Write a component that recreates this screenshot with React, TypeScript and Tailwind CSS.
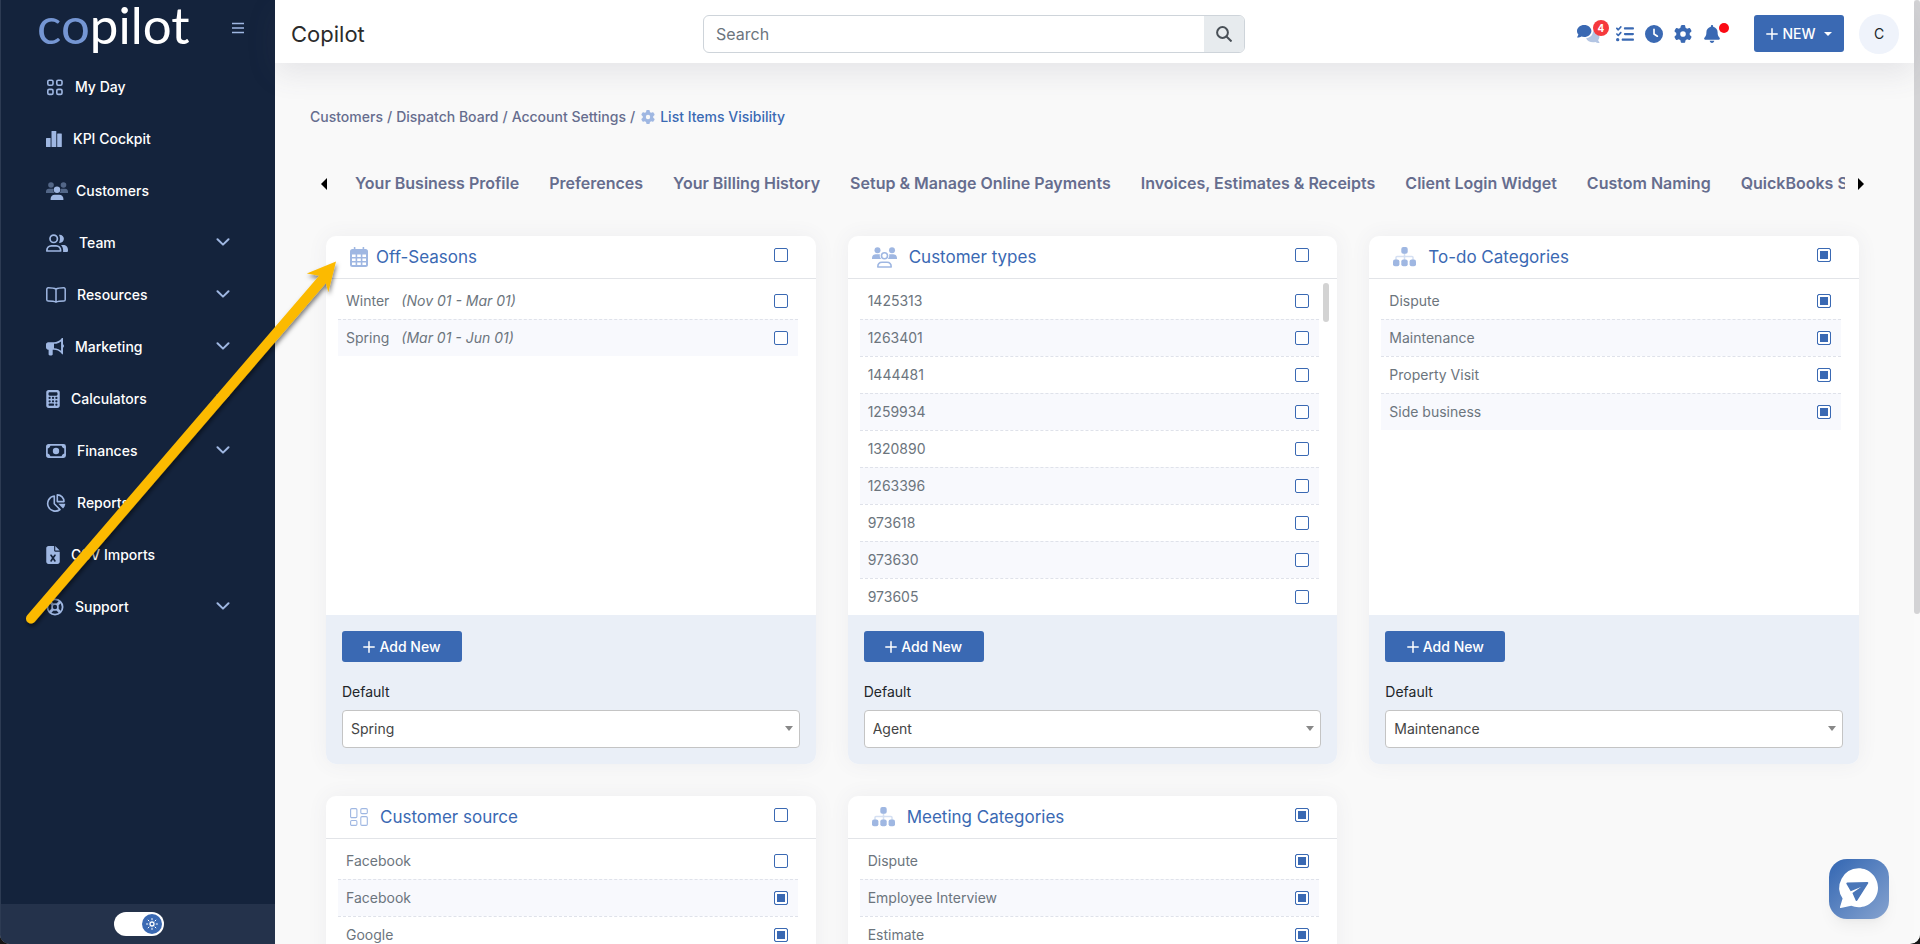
import { useState } from "react";
import type { ReactNode } from "react";
import {
  FaBell,
  FaCalculator,
  FaClock,
  FaFileExcel,
  FaGear,
  FaListCheck,
} from "react-icons/fa6";

type Item = { name: string; note?: string; checked?: boolean };

type ListCard = {
  id: string;
  title: string;
  icon: ReactNode;
  checked?: boolean;
  items: Item[];
  defaultValue: string;
  scrollable?: boolean;
};

/* ---------- Icons ---------- */

function GridIcon() {
  return (
    <svg viewBox="0 0 18 17" className="w-[18px] h-[17px]" fill="none" stroke="#9fb7e2" strokeWidth="1.6">
      <rect x="1.800" y="1.200" width="5.200" height="5" rx="1.400" />
      <rect x="10.800" y="1.200" width="5.200" height="5" rx="1.400" />
      <rect x="1.800" y="10.400" width="5.200" height="5" rx="1.400" />
      <rect x="10.800" y="10.400" width="5.200" height="5" rx="1.400" />
    </svg>
  );
}

function BarsIcon() {
  return (
    <svg viewBox="0 0 16 16" className="w-4 h-4" fill="#9fb7e2">
      <rect x="0" y="7" width="4.600" height="9" rx=".5" />
      <rect x="5.500" y="0" width="4.800" height="16" rx=".5" />
      <rect x="11.200" y="2.600" width="4.600" height="13.400" rx=".5" />
    </svg>
  );
}

function CustomersIcon() {
  return (
    <svg viewBox="0 0 22 18" className="w-[22px] h-[18px]" fill="#9fb7e2">
      <g opacity="0.45">
        <circle cx="5" cy="3" r="2.8" />
        <circle cx="17.5" cy="3" r="2.8" />
        <path d="M0 11V9.600C0 8 1.200 6.800 2.800 6.800h3.600c.4 0 .8.100 1.100.3-.5 1.600 0 2.900 1 3.900z" />
        <path d="M22 11V9.600c0-1.600-1.200-2.800-2.800-2.800h-3.600c-.4 0-.8.100-1.100.3.5 1.600 0 2.900-1 3.900z" />
      </g>
      <circle cx="11" cy="7.700" r="3.200" />
      <path d="M4.500 17.500c0-2.800 1.700-4.700 4.300-4.700h4.400c2.600 0 4.300 1.900 4.300 4.700 0 .3-.2.500-.5.500H5c-.3 0-.5-.2-.5-.5z" />
    </svg>
  );
}

function TeamIcon() {
  return (
    <svg viewBox="0 0 22 18" className="w-[22px] h-[18px]" fill="none" stroke="#9fb7e2" strokeWidth="1.7">
      <circle cx="7.700" cy="4.800" r="3.700" />
      <path d="M.9 17v-.8c0-2.500 2-4.400 4.400-4.400h4.900c2.400 0 4.400 1.900 4.400 4.400v.8z" strokeLinejoin="round" />
      <path d="M13 .8c2.600-.4 4.900 1.500 4.900 4s-2.300 4.500-4.900 4c1.300-2.500 1.300-5.500 0-8z" fill="#9fb7e2" stroke="none" />
      <path d="M15 11h2.300c2.600 0 4.700 2 4.700 4.700V17c0 .5-.4.900-.9.900h-4c.3-2.600-.4-5.200-2.100-6.900z" fill="#9fb7e2" stroke="none" />
    </svg>
  );
}

function BookIcon() {
  return (
    <svg viewBox="0 0 20 16" className="w-5 h-4" fill="none" stroke="#9fb7e2" strokeWidth="1.5" strokeLinejoin="round">
      <path d="M10 2.200C8.200 1 5.500.8 2.200.8c-.9 0-1.400.5-1.400 1.400v10.600c0 .9.500 1.300 1.400 1.300 3.300 0 6 .2 7.800 1.100 1.800-.9 4.500-1.100 7.800-1.100.9 0 1.400-.4 1.400-1.300V2.200c0-.9-.5-1.400-1.400-1.400-3.300 0-6 .2-7.800 1.400zM10 2.200v12.600" />
    </svg>
  );
}

function MegaphoneIcon() {
  return (
    <svg viewBox="0 0 18 18" className="w-[18px] h-[18px]" fill="#9fb7e2">
      <path d="M2.200 4.200H8v7.600H6.700v4.400c0 .7-.5 1.200-1.200 1.200H3.800c-.7 0-1.200-.5-1.200-1.200v-4.400h-.4C1 11.800 0 10.800 0 9.600V6.400c0-1.200 1-2.200 2.200-2.200z" />
      <path d="M8 5c3.200 0 5.800-1.400 8.100-3.700v13.400C13.800 12.400 11.200 11 8 11" fill="none" stroke="#9fb7e2" strokeWidth="1.700" />
      <path d="M15.300.9c0-.9 1.700-.9 1.700 0v5.300c.6.400 1 1 1 1.800s-.4 1.400-1 1.800v5.300c0 .9-1.700.9-1.700 0z" />
    </svg>
  );
}

function MoneyIcon() {
  return (
    <svg viewBox="0 0 20 14" className="w-5 h-[14px]">
      <rect x=".9" y=".9" width="18.200" height="12.200" rx="1.600" fill="none" stroke="#9fb7e2" strokeWidth="1.700" />
      <circle cx="10" cy="7" r="3.200" fill="#9fb7e2" />
      <path d="M1 1h3.500c0 1.900-1.600 3.500-3.500 3.500zM19 1h-3.500c0 1.900 1.600 3.500 3.500 3.500zM1 13h3.500c0-1.900-1.600-3.500-3.500-3.500zM19 13h-3.500c0-1.900 1.600-3.500 3.500-3.500z" fill="#9fb7e2" />
    </svg>
  );
}

function PieIcon() {
  return (
    <svg viewBox="0 0 20 18" className="w-5 h-[18px]" fill="none" stroke="#9fb7e2" strokeWidth="1.600" strokeLinejoin="round">
      <path d="M8.300 2A7.600 7.600 0 1 0 14 15.500L8.300 9.800z" />
      <path d="M11.300.9c3.800 0 6.700 2.900 6.700 6.700h-6.700z" />
      <path d="M12.300 9.800h7c-.2 1.900-1 3.500-2.300 4.800z" fill="#9fb7e2" stroke="none" />
    </svg>
  );
}

function LifeRingIcon() {
  return (
    <svg viewBox="0 0 18 18" className="w-[18px] h-[18px]" fill="none" stroke="#9fb7e2">
      <circle cx="9" cy="9" r="7.600" strokeWidth="1.800" />
      <circle cx="9" cy="9" r="3" strokeWidth="1.600" />
      <path d="M3.600 3.600L6.800 6.800M14.400 3.600l-3.200 3.200M3.600 14.400l3.200-3.200M14.400 14.400l-3.200-3.200" strokeWidth="2.800" />
    </svg>
  );
}

function CommentsIcon() {
  return (
    <svg viewBox="0 0 24 18" className="w-6 h-[18px]">
      <path d="M16 6.200c3.600.2 6.400 2.500 6.400 5.500 0 1.300-.5 2.400-1.300 3.400.2.900.7 1.600 1.300 2.200.2.300 0 .7-.4.700-1.400 0-2.600-.5-3.500-1.100-3.900 1-8.200-.4-9.400-3.700 4-.4 7-3.300 6.900-7z" fill="#b3c5e3" />
      <path d="M7.200 0c4 0 7.200 2.700 7.200 6s-3.200 6-7.200 6c-1 0-2-.2-2.900-.5-.9.600-2.200 1.100-3.700 1.100-.5 0-.6-.4-.4-.7.500-.6 1-1.400 1.200-2.300C.5 8.600 0 7.400 0 6c0-3.300 3.200-6 7.200-6z" fill="#3a69b3" />
    </svg>
  );
}

function CalendarIcon() {
  return (
    <svg viewBox="0 0 18 20" className="w-[18px] h-5">
      <rect x="0" y="2" width="18" height="18" rx="2.500" fill="#9fb7e2" />
      <path d="M4.600.5v3M13.400.5v3" stroke="#9fb7e2" strokeWidth="1.600" strokeLinecap="round" />
      <g fill="#fff">
        {[7.5, 11.5, 15.5].map((y) =>
          [2, 7.2, 12.4].map((x) => <rect key={`${x}-${y}`} x={x} y={y} width="3.600" height="2.500" />)
        )}
      </g>
    </svg>
  );
}

function TypesIcon() {
  return (
    <svg viewBox="0 0 25 21" className="w-[25px] h-[21px]" fill="#9fb7e2">
      <circle cx="5.500" cy="3.200" r="3" />
      <circle cx="20" cy="3.200" r="3" />
      <path d="M0 12v-1c0-2.200 1.500-3.800 3.700-3.800H7c.3 0 .6 0 .9.100-.5 1.800.1 3.500 1.300 4.700zM25 12v-1c0-2.200-1.500-3.800-3.700-3.800H18c-.3 0-.6 0-.9.100.5 1.800-.1 3.500-1.300 4.700z" />
      <circle cx="12.500" cy="8.800" r="3" fill="none" stroke="#9fb7e2" strokeWidth="1.600" />
      <path d="M5.800 20c0-3 1.700-4.700 4.200-4.700h5c2.500 0 4.200 1.700 4.200 4.700z" fill="none" stroke="#9fb7e2" strokeWidth="1.600" strokeLinejoin="round" />
    </svg>
  );
}

function SitemapIcon() {
  return (
    <svg viewBox="0 0 23 20" className="w-[23px] h-5">
      <path d="M3 13v-2.500c0-.6.400-1 1-1h15c.6 0 1 .4 1 1V13M11.500 6v7" fill="none" stroke="#d5e0f2" strokeWidth="1.500" />
      <g fill="#9fb7e2">
        <rect x="8.300" y="0" width="6.400" height="6.800" rx="2" />
        <rect x="0" y="12.500" width="6.400" height="6.800" rx="2" />
        <rect x="8.300" y="12.500" width="6.400" height="6.800" rx="2" />
        <rect x="16.600" y="12.500" width="6.400" height="6.800" rx="2" />
      </g>
    </svg>
  );
}

function SourceIcon() {
  return (
    <svg viewBox="0 0 18 18" className="w-[18px] h-[18px]" fill="none" stroke="#9fb7e2" strokeWidth="1.100">
      <rect x=".6" y=".6" width="6.300" height="9" rx="1.200" />
      <rect x="10.800" y=".6" width="6.500" height="5" rx="1.200" />
      <rect x=".6" y="12.500" width="6.300" height="4.900" rx="1.200" />
      <rect x="10.800" y="8.600" width="6.500" height="8.800" rx="1.200" />
    </svg>
  );
}

function PlusIcon() {
  return (
    <svg viewBox="0 0 12 12" className="w-3 h-3" stroke="#fff" strokeWidth="1.500" strokeLinecap="round">
      <path d="M6 .8v10.400M.8 6h10.400" />
    </svg>
  );
}

/* ---------- Data ---------- */

const NAV = [
  { label: "My Day", icon: <GridIcon /> },
  { label: "KPI Cockpit", icon: <BarsIcon /> },
  { label: "Customers", icon: <CustomersIcon />, tight: true },
  { label: "Team", icon: <TeamIcon />, open: true },
  { label: "Resources", icon: <BookIcon />, open: true },
  { label: "Marketing", icon: <MegaphoneIcon />, open: true },
  { label: "Calculators", icon: <FaCalculator className="w-[14px] h-[18px]" />, open: true },
  { label: "Finances", icon: <MoneyIcon />, open: true },
  { label: "Reports", icon: <PieIcon /> },
  { label: "CSV Imports", icon: <FaFileExcel className="w-[14px] h-[18px]" /> },
  { label: "Support", icon: <LifeRingIcon />, open: true },
];

const TABS = [
  "Your Business Profile",
  "Preferences",
  "Your Billing History",
  "Setup & Manage Online Payments",
  "Invoices, Estimates & Receipts",
  "Client Login Widget",
  "Custom Naming",
  "QuickBooks Settings",
];

const CARDS: ListCard[] = [
  {
    id: "off-seasons",
    title: "Off-Seasons",
    icon: <CalendarIcon />,
    items: [
      { name: "Winter", note: "(Nov 01 - Mar 01)" },
      { name: "Spring", note: "(Mar 01 - Jun 01)" },
    ],
    defaultValue: "Spring",
  },
  {
    id: "customer-types",
    title: "Customer types",
    icon: <TypesIcon />,
    items: ["1425313", "1263401", "1444481", "1259934", "1320890", "1263396", "973618", "973630", "973605"].map(
      (name) => ({ name })
    ),
    defaultValue: "Agent",
    scrollable: true,
  },
  {
    id: "todo-categories",
    title: "To-do Categories",
    icon: <SitemapIcon />,
    checked: true,
    items: ["Dispute", "Maintenance", "Property Visit", "Side business"].map((name) => ({ name, checked: true })),
    defaultValue: "Maintenance",
  },
  {
    id: "customer-source",
    title: "Customer source",
    icon: <SourceIcon />,
    items: [
      { name: "Facebook" },
      { name: "Facebook", checked: true },
      { name: "Google", checked: true },
    ],
    defaultValue: "Google",
  },
  {
    id: "meeting-categories",
    title: "Meeting Categories",
    icon: <SitemapIcon />,
    checked: true,
    items: ["Dispute", "Employee Interview", "Estimate"].map((name) => ({ name, checked: true })),
    defaultValue: "Estimate",
  },
];

/* ---------- Layout parts ---------- */

function Sidebar() {
  const [light, setLight] = useState(true);

  return (
    <aside className="w-[275px] shrink-0 flex flex-col bg-[#14233c] border-l border-[#2d3b53]">
      <div className="h-[61px] shrink-0 flex items-start justify-between pl-9 pr-[31px]">
        <a href="#" className="font-[Lato,sans-serif] text-[51px] leading-[50px] text-white">
          <span className="text-[#7596d3]">co</span>pilot
        </a>
        <button aria-label="Toggle menu" className="mt-[22px]">
          <svg viewBox="0 0 12 12" className="w-3 h-3" stroke="#9fb7e2" strokeWidth="1.500">
            <path d="M0 1.500h12M0 6h12M0 10.500h12" />
          </svg>
        </button>
      </div>

      <nav className="flex-1 min-h-0 overflow-hidden">
        {NAV.map((item) => (
          <a
            key={item.label}
            href="#"
            className={`h-[52px] px-[45px] flex items-center text-sm font-medium text-white ${
              item.tight ? "gap-2" : "gap-[11px]"
            }`}
          >
            <span className="text-[#9fb7e2] shrink-0">{item.icon}</span>
            {item.label}
            {item.open && (
              <svg viewBox="0 0 14 10" className="w-[14px] h-[10px] ml-auto" fill="none" stroke="#9fb7e2" strokeWidth="2">
                <path d="M1.500 1.200L7 6.600l5.500-5.400" strokeLinecap="round" strokeLinejoin="round" />
              </svg>
            )}
          </a>
        ))}
      </nav>

      <div className="h-10 shrink-0 flex items-center justify-center pl-0.5 bg-[#24324b]">
        <button
          role="switch"
          aria-checked={light}
          aria-label="Light theme"
          onClick={() => setLight(!light)}
          className={`w-[50px] h-6 px-0.5 rounded-full bg-white flex items-center ${
            light ? "justify-end" : "justify-start"
          }`}
        >
          <span className="w-5 h-5 rounded-full bg-[#3a69b3] flex items-center justify-center">
            <svg viewBox="0 0 12 12" className="w-3 h-3" fill="none" stroke="#fff" strokeLinecap="round">
              <circle cx="6" cy="6" r="2" strokeWidth="1.300" />
              <path d="M6 .5v1.300M6 10.200v1.300M.5 6h1.300M10.200 6h1.300M2.100 2.100l.9.900M9 9l.9.900M2.100 9.900L3 9M9 3l.9-.9" />
            </svg>
          </span>
        </button>
      </div>
    </aside>
  );
}

function TopBar() {
  return (
    <header className="relative z-10 h-[63px] shrink-0 bg-white flex items-center pr-[15px] shadow-[0_10px_30px_rgba(82,85,110,0.12)]">
      <h1 className="w-[428px] pl-4 mt-1 text-[22px] leading-8 text-[#2b2b2b]">Copilot</h1>

      <form className="w-[34%] max-w-[542px] h-[38px] mt-1 flex rounded-md border border-[#ced4da] bg-white overflow-hidden">
        <input
          type="text"
          aria-label="Search"
          placeholder="Search"
          className="flex-1 min-w-0 px-3 text-base text-[#212529] placeholder:text-[#6c757d] focus:outline-none"
        />
        <button type="button" aria-label="Run search" className="w-10 bg-[#e7ebee] flex items-center justify-center">
          <svg viewBox="0 0 16 16" className="w-4 h-4" fill="none" stroke="#495057" strokeWidth="2">
            <circle cx="6.500" cy="6.500" r="5.400" />
            <path d="M10.500 10.500l5 5" />
          </svg>
        </button>
      </form>

      <div className="ml-auto mt-1 flex items-center gap-[11px] text-[#3a69b3]">
        <button aria-label="Messages" className="relative mr-1">
          <CommentsIcon />
          <span className="absolute -top-[5px] -right-2 w-4 h-4 rounded-full bg-[#f5393d] text-white text-[10px] leading-4 font-bold text-center">
            4
          </span>
        </button>
        <button aria-label="Tasks">
          <FaListCheck className="w-[18px] h-[18px]" />
        </button>
        <button aria-label="History">
          <FaClock className="w-[18px] h-[18px]" />
        </button>
        <button aria-label="Settings">
          <FaGear className="w-[18px] h-[18px]" />
        </button>
        <button aria-label="Notifications" className="relative">
          <FaBell className="w-[18px] h-[18px]" />
          <span className="absolute -top-0.5 -right-2 w-2.5 h-2.5 rounded-full bg-[#fb0a14]" />
        </button>
      </div>

      <button className="ml-[33px] mt-1 w-[90px] h-[37px] rounded-[3px] bg-[#3a69b3] text-white text-sm font-medium flex items-center justify-center gap-1">
        <PlusIcon />
        NEW
        <span className="ml-1 border-x-4 border-t-4 border-x-transparent border-t-white" />
      </button>
      <button
        aria-label="Account"
        className="ml-[15px] mt-1 w-10 h-10 rounded-full bg-[#eff3fb] text-sm text-[#212529] shrink-0"
      >
        C
      </button>
    </header>
  );
}

function Breadcrumbs() {
  return (
    <div className="pl-[35px] pt-[43px] h-16 flex items-center gap-1 text-sm font-medium text-[#666d8e] whitespace-nowrap">
      <a href="#">Customers</a>/<a href="#">Dispatch Board</a>/<a href="#">Account Settings</a>/
      <a href="#" className="ml-0.5 flex items-center gap-[5px] text-[#3a69b3]">
        <FaGear className="w-[14px] h-[14px] text-[#9fb7e2]" />
        List Items Visibility
      </a>
    </div>
  );
}

function Tabs() {
  return (
    <div className="mt-9 pl-[46px] pr-[50px] h-[42px] flex items-center">
      <button aria-label="Scroll tabs left" className="border-y-6 border-r-6 border-y-transparent border-r-black" />
      <div className="flex-1 min-w-0 ml-7 mr-[13px] pb-0.5 flex gap-[30px] overflow-hidden text-base font-semibold text-[#666d8e] whitespace-nowrap">
        {TABS.map((tab) => (
          <a key={tab} href="#" className="shrink-0">
            {tab}
          </a>
        ))}
      </div>
      <button aria-label="Scroll tabs right" className="border-y-6 border-l-6 border-y-transparent border-l-black" />
    </div>
  );
}

function CheckBox({ id, checked, label }: { id: string; checked?: boolean; label?: string }) {
  return (
    <input
      id={id}
      type="checkbox"
      aria-label={label}
      defaultChecked={checked}
      className="appearance-none w-[14px] h-[14px] shrink-0 rounded-[2px] border border-[#3a69b3] bg-white checked:bg-[#3a69b3] checked:shadow-[inset_0_0_0_2px_#fff]"
    />
  );
}

function Card({ card }: { card: ListCard }) {
  return (
    <section className="rounded-[10px] bg-white overflow-hidden shadow-[0_0_20px_rgba(82,85,110,0.07)]">
      <div className="h-[43px] pl-6 pr-7 flex items-center border-b border-[#e2e4e8]">
        {card.icon}
        <h2 className={`text-[17px] leading-6 text-[#3a69b3] ${card.id === "off-seasons" ? "ml-2" : "ml-3"}`}>
          {card.title}
        </h2>
        <span className="ml-auto mb-1 flex">
          <CheckBox id={`${card.id}-all`} checked={card.checked} label={`All ${card.title}`} />
        </span>
      </div>

      <div className="relative h-[336px] pt-[3px] pl-3 pr-[18px] overflow-hidden">
        <ul>
          {card.items.map((item, i) => (
            <li
              key={i}
              className="h-[37px] pl-2 pr-[10px] flex items-center text-sm text-[#6c757d] even:bg-[#f8f9fd] not-first:border-t border-dashed border-[#dfe2ea]"
            >
              <label htmlFor={`${card.id}-${i}`} className="flex-1 flex gap-3">
                {item.name}
                {item.note && <em>{item.note}</em>}
              </label>
              <CheckBox id={`${card.id}-${i}`} checked={item.checked} />
            </li>
          ))}
        </ul>
        {card.scrollable && <div className="absolute right-2 top-1 w-1.5 h-[39px] rounded-full bg-[#d3d3d3]" />}
      </div>

      <div className="p-4 bg-[#eaeff7]">
        <button className="w-[120px] h-[31px] rounded-[3px] bg-[#3a69b3] text-white text-sm font-medium flex items-center justify-center gap-1">
          <PlusIcon />
          Add New
        </button>
        <label htmlFor={`${card.id}-default`} className="mt-5 mb-2 block text-sm text-[#212529]">
          Default
        </label>
        <div className="relative">
          <select
            id={`${card.id}-default`}
            defaultValue={card.defaultValue}
            className="appearance-none w-full h-[38px] pl-2 pr-6 rounded-[4px] border border-[#c4c4c4] bg-white text-sm text-[#444444]"
          >
            <option>{card.defaultValue}</option>
          </select>
          <span className="pointer-events-none absolute right-[7px] top-4 border-x-4 border-t-5 border-x-transparent border-t-[#888888]" />
        </div>
      </div>
    </section>
  );
}

function ChatWidget() {
  return (
    <button
      aria-label="Open chat"
      className="absolute right-[31px] bottom-[25px] z-20 w-[60px] h-[60px] rounded-[18px] bg-linear-to-br from-[#3266b2] to-[#86a3cf] flex items-center justify-center shadow-lg shadow-black/5"
    >
      <svg viewBox="0 0 60 60" className="w-[60px] h-[60px]">
        <path
          d="M29.500 9.200c10.800 0 19.500 8.700 19.500 19.500s-8.700 19.500-19.500 19.500c-2.600 0-5-.5-7.300-1.400L11.800 49c-.6.100-1-.4-.8-1l2.600-8.500A19.500 19.500 0 0 1 29.500 9.200z"
          fill="#fff"
        />
        <path
          d="M18.200 23.400l20.200-.4c.8 0 1.200.8.700 1.400L28.300 41.600c-.4.700-1.300.6-1.600-.1l-3.300-7.500 8.600-6-10.300 4.300-4.200-7.300c-.4-.7 0-1.500.7-1.600z"
          fill="#4a76b8"
        />
      </svg>
    </button>
  );
}

function ArrowOverlay() {
  return (
    <svg viewBox="0 0 350 640" className="absolute left-0 top-0 z-30 w-[350px] h-[640px] pointer-events-none">
      <defs>
        <filter id="arrow-shadow" x="-10%" y="-10%" width="120%" height="120%">
          <feDropShadow dx="1" dy="3" stdDeviation="2" floodColor="#000" floodOpacity="0.5" />
        </filter>
      </defs>
      <g filter="url(#arrow-shadow)" fill="#fcba04">
        <path d="M31 618.500L322 280" stroke="#fcba04" strokeWidth="10" strokeLinecap="round" />
        <path d="M336 261.500L306.800 273.500l12.500 2.200 6.500 7 2.500 9.600z" />
      </g>
    </svg>
  );
}

export default function App() {
  return (
    <div className="h-screen bg-[#161616]">
      <div className="relative h-full flex rounded-b-[10px] overflow-hidden bg-[#f9f9f9] font-[Inter,sans-serif]">
        <Sidebar />

        <div className="flex-1 min-w-0 flex flex-col">
          <TopBar />
          <main className="flex-1 min-h-0 overflow-hidden">
            <Breadcrumbs />
            <Tabs />
            <div className="pt-[31px] pl-[51px] pr-[55px] grid grid-cols-3 gap-8">
              {CARDS.map((card) => (
                <Card key={card.id} card={card} />
              ))}
            </div>
          </main>
        </div>

        {/* Page scrollbar */}
        <div className="w-1.5 shrink-0 bg-[#fafafa]">
          <div className="h-[65%] rounded-full bg-[#d3d3d5]" />
        </div>

        <ChatWidget />
        <ArrowOverlay />
      </div>
    </div>
  );
}
